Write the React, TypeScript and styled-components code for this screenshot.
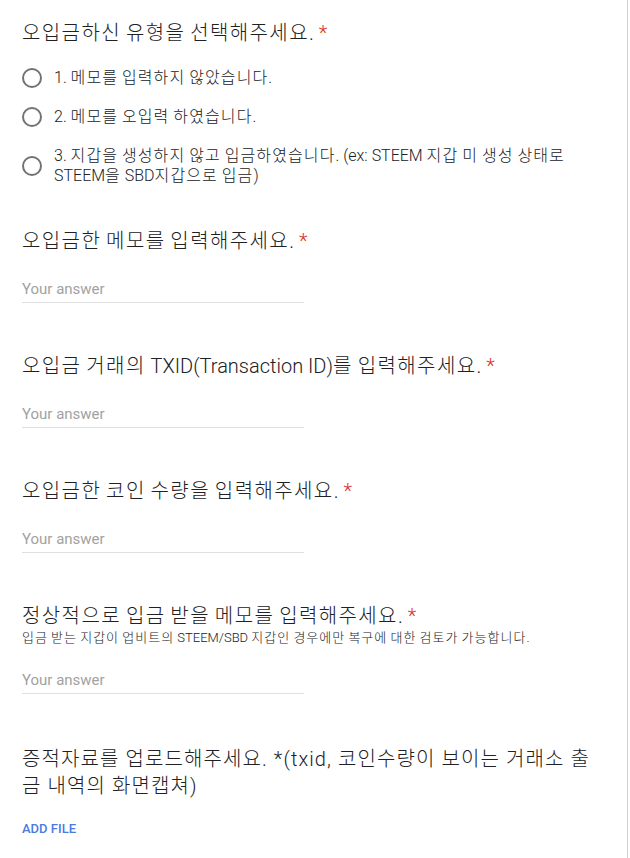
import React from "react";
import styled, { createGlobalStyle } from "styled-components";

const GlobalStyle = createGlobalStyle`
  html, body {
    margin: 0;
    padding: 0;
    background: #ffffff;
  }
  body {
    font-family: "Roboto", "Noto Sans CJK KR", sans-serif;
    color: #202124;
  }
`;

const Card = styled.div`
  width: 628px;
  box-sizing: border-box;
  border-right: 1px solid #cfd0d4;
  background: #ffffff;
  padding: 20px 31px 20px 22px;
  min-height: 858px;
  display: flex;
  flex-direction: column;
  gap: 41px;
`;

const Question = styled.section`
  display: flex;
  flex-direction: column;
`;

const Title = styled.div<{ $tracking?: number }>`
  font-size: 20px;
  line-height: 27px;
  font-weight: 300;
  color: #202124;
  letter-spacing: ${(p) => p.$tracking ?? 1.4}px;
  word-break: break-all;
`;

const Latin = styled.span`
  letter-spacing: 0;
`;

const Required = styled.span`
  color: #d93025;
  margin-left: 5px;
`;

const Description = styled.div`
  font-size: 13px;
  line-height: 16px;
  font-weight: 300;
  color: #202124;
  letter-spacing: 1px;
`;

const Options = styled.div`
  margin-top: 21px;
  margin-bottom: 1px;
  display: flex;
  flex-direction: column;
  gap: 19px;
`;

const OptionRow = styled.label`
  display: flex;
  align-items: center;
  gap: 12px;
`;

const Radio = styled.span`
  flex: none;
  width: 20px;
  height: 20px;
  box-sizing: border-box;
  border: 2px solid #737373;
  border-radius: 50%;
`;

const OptionText = styled.span`
  font-size: 16px;
  line-height: 20px;
  font-weight: 300;
  color: #202124;
  letter-spacing: 1.1px;
`;

const Field = styled.div<{ $last?: boolean }>`
  margin-top: 24px;
  margin-bottom: ${(p) => (p.$last ? 11 : 9)}px;
  width: 282px;
  border-bottom: 1px solid #e0e0e0;
  padding-bottom: 3px;
`;

const Placeholder = styled.div`
  font-size: 15px;
  line-height: 20px;
  color: #a2a2a2;
`;

const AddFile = styled.div`
  margin-top: 21px;
  font-size: 13px;
  line-height: 16px;
  font-weight: 500;
  color: #4a7bdf;
`;

/* Hangul runs keep the looser tracking of the original; Latin runs are set tight. */
function Mixed({ text }: { text: string }) {
  const parts = text.split(/([\x00-\x7F]+)/).filter((p) => p.length > 0);
  return (
    <>
      {parts.map((p, i) =>
        /^[\x00-\x7F]+$/.test(p) ? <Latin key={i}>{p}</Latin> : <React.Fragment key={i}>{p}</React.Fragment>
      )}
    </>
  );
}

const options = [
  "1. 메모를 입력하지 않았습니다.",
  "2. 메모를 오입력 하였습니다.",
  "3. 지갑을 생성하지 않고 입금하였습니다. (ex: STEEM 지갑 미 생성 상태로 STEEM을 SBD지갑으로 입금)",
];

type TextQ = { title: string; desc?: string };

const textQuestions: TextQ[] = [
  { title: "오입금한 메모를 입력해주세요." },
  { title: "오입금 거래의 TXID(Transaction ID)를 입력해주세요." },
  { title: "오입금한 코인 수량을 입력해주세요." },
  {
    title: "정상적으로 입금 받을 메모를 입력해주세요.",
    desc: "입금 받는 지갑이 업비트의 STEEM/SBD 지갑인 경우에만 복구에 대한 검토가 가능합니다.",
  },
];

export default function App() {
  return (
    <>
      <GlobalStyle />
      <Card>
        <Question>
          <Title>
            <Mixed text="오입금하신 유형을 선택해주세요." />
            <Required>*</Required>
          </Title>
          <Options>
            {options.map((o) => (
              <OptionRow key={o}>
                <Radio />
                <OptionText>
                  <Mixed text={o} />
                </OptionText>
              </OptionRow>
            ))}
          </Options>
        </Question>
        {textQuestions.map((q, i) => (
          <Question key={q.title}>
            <Title>
              <Mixed text={q.title} />
              <Required>*</Required>
            </Title>
            {q.desc && (
              <Description>
                <Mixed text={q.desc} />
              </Description>
            )}
            <Field $last={i === textQuestions.length - 1}>
              <Placeholder>Your answer</Placeholder>
            </Field>
          </Question>
        ))}
        <Question>
          <Title $tracking={1.1}>
            증적자료를 업로드해주세요. *(txid, 코인수량이 보이는 거래소 출금 내역의 화면캡쳐)
          </Title>
          <AddFile>ADD FILE</AddFile>
        </Question>
      </Card>
    </>
  );
}
